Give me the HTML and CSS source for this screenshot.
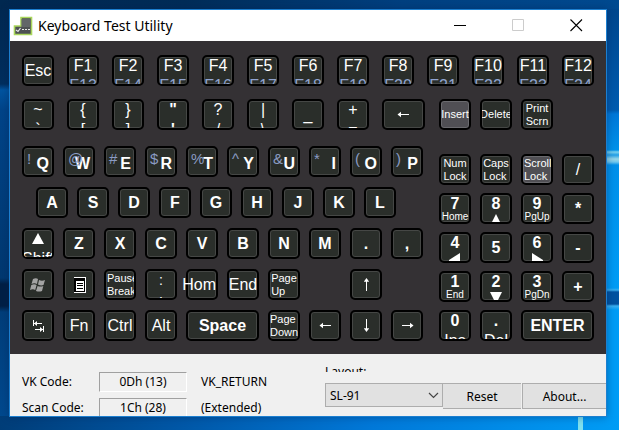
FILE: index.html
```html
<!DOCTYPE html>
<html lang="en">
<head>
<meta charset="utf-8">
<title>Keyboard Test Utility</title>
<link rel="stylesheet" href="styles.css">
</head>
<body>
<svg width="0" height="0" class="defs" aria-hidden="true">
  <defs>
    <symbol id="left" viewBox="0 0 13 13"><path d="M1 6.500h11" stroke="#fff"/><path d="M.5 6.500L4 3.800v5.400z" fill="#fff"/></symbol>
    <symbol id="up" viewBox="0 0 13 13"><path d="M6.500 1v12" stroke="#fff"/><path d="M6.500 0l2.700 3.700H3.800z" fill="#fff"/></symbol>
  </defs>
</svg>
<main class="window">
  <header class="titlebar">
    <svg class="app-icon" viewBox="0 0 20 20" aria-hidden="true">
      <path d="M8 1.500h10.500v17H1.500V10H8z" fill="#4d5153" stroke="#a9d65c" stroke-width="1.600"/>
      <path d="M8.500 3h9v8h-9z" fill="#626668"/>
      <path d="M3 14l2 1.500L7.500 12M9 13.500h2m1 0h2m1 0h2" fill="none" stroke="#e8e8e8" stroke-width="1.200"/>
    </svg>
    <h1>Keyboard Test Utility</h1>
    <button class="caption" aria-label="Minimize"><svg viewBox="0 0 13 13"><path d="M0 6.500h12" stroke="#000"/></svg></button>
    <button class="caption" aria-label="Maximize" disabled><svg viewBox="0 0 13 13"><path d="M.5.5h11v11H.5z" fill="none" stroke="#ccc"/></svg></button>
    <button class="caption" aria-label="Close"><svg viewBox="0 0 13 13"><path d="M.5.5l11.500 11.500M12 .5L.5 12" stroke="#000" stroke-width="1.100"/></svg></button>
  </header>

  <section class="keyboard">
    <div class="row spread">
      <button class="key">Esc</button>
      <button class="key dual fn">F1<span>F13</span></button>
      <button class="key dual fn">F2<span>F14</span></button>
      <button class="key dual fn">F3<span>F15</span></button>
      <button class="key dual fn">F4<span>F16</span></button>
      <button class="key dual fn">F5<span>F17</span></button>
      <button class="key dual fn">F6<span>F18</span></button>
      <button class="key dual fn">F7<span>F19</span></button>
      <button class="key dual fn">F8<span>F20</span></button>
      <button class="key dual fn">F9<span>F21</span></button>
      <button class="key dual fn">F10<span>F22</span></button>
      <button class="key dual fn">F11<span>F23</span></button>
      <button class="key dual fn">F12<span>F24</span></button>
    </div>
    <div class="row spread second">
      <div class="row symbols">
        <button class="key dual">~<span>`</span></button>
        <button class="key dual">{<span>[</span></button>
        <button class="key dual">}<span>]</span></button>
        <button class="key dual bold">"<span>'</span></button>
        <button class="key dual">?<span>/</span></button>
        <button class="key dual">|<span>\</span></button>
        <button class="key">_</button>
        <button class="key dual">+<span>=</span></button>
        <button class="key backspace" aria-label="Backspace"><svg class="arrow"><use href="#left"/></svg></button>
      </div>
      <div class="pad">
        <button class="key small pressed">Insert</button>
        <button class="key small">Delete</button>
        <button class="key small">Print<br>Scrn</button>
      </div>
    </div>
    <div class="row spread lower">
      <div class="letters">
        <div class="keys">
          <button class="key letter"><span>!</span>Q</button>
          <button class="key letter"><span>@</span>W</button>
          <button class="key letter"><span>#</span>E</button>
          <button class="key letter"><span>$</span>R</button>
          <button class="key letter"><span>%</span>T</button>
          <button class="key letter"><span>^</span>Y</button>
          <button class="key letter"><span>&amp;</span>U</button>
          <button class="key letter"><span>*</span>I</button>
          <button class="key letter"><span>(</span>O</button>
          <button class="key letter"><span>)</span>P</button>
        </div>
        <div class="keys home-row">
          <button class="key bold">A</button>
          <button class="key bold">S</button>
          <button class="key bold">D</button>
          <button class="key bold">F</button>
          <button class="key bold">G</button>
          <button class="key bold">H</button>
          <button class="key bold">J</button>
          <button class="key bold">K</button>
          <button class="key bold">L</button>
        </div>
        <div class="keys">
          <button class="key dual"><svg class="shift" viewBox="0 0 12 18" aria-hidden="true"><path d="M6 3l6 11H0z" fill="#fff"/></svg><span>Shift</span></button>
          <button class="key bold">Z</button>
          <button class="key bold">X</button>
          <button class="key bold">C</button>
          <button class="key bold">V</button>
          <button class="key bold">B</button>
          <button class="key bold">N</button>
          <button class="key bold">M</button>
          <button class="key bold">.</button>
          <button class="key bold">,</button>
        </div>
        <div class="keys">
          <button class="key" aria-label="Windows"><svg class="glyph" viewBox="0 0 17 16"><path d="M3 2q3-1.500 5 0L7 7Q4.500 5.500 1.500 7zM9 3q3 1.300 6 0l-1.500 5Q11 9 8 7.500zM1.300 8q3-1.500 5.300 0L5.200 13Q3 11.500 0 13zM7.600 9q3 1.200 5.700 0L12 14q-3 1.200-6 0z" fill="#a3a3a3"/></svg></button>
          <button class="key" aria-label="Menu"><svg class="glyph" viewBox="0 0 17 16"><path d="M3 0h12v16H3z" fill="#fff"/><path d="M3 1h11v14H3z" fill="#000"/><path d="M5 4h8v10H5z" fill="#fff"/><path d="M6 6.500h6M6 8.500h6M6 11.500h6" stroke="#000"/></svg></button>
          <button class="key small start">Pause<br>Break</button>
          <button class="key dual colon">:<span>;</span></button>
          <button class="key spill">Hom</button>
          <button class="key">End</button>
          <button class="key small">Page<br>Up</button>
          <button class="key up-key" aria-label="Up"><svg class="arrow"><use href="#up"/></svg></button>
        </div>
        <div class="keys">
          <button class="key" aria-label="Tab"><svg class="glyph" viewBox="0 0 17 16"><path d="M3.500 2v6M4 5.500h8M13.500 8v6M5 11.500h8" stroke="#fff"/><path d="M4 5.500L7 3v5zM13 11.500L10 9v5z" fill="#fff"/></svg></button>
          <button class="key">Fn</button>
          <button class="key">Ctrl</button>
          <button class="key">Alt</button>
          <button class="key bold wide">Space</button>
          <button class="key small">Page<br>Down</button>
          <button class="key" aria-label="Left"><svg class="arrow"><use href="#left"/></svg></button>
          <button class="key" aria-label="Down"><svg class="arrow half-turn"><use href="#up"/></svg></button>
          <button class="key" aria-label="Right"><svg class="arrow half-turn"><use href="#left"/></svg></button>
        </div>
      </div>
      <div class="pad">
        <button class="key small">Num<br>Lock</button>
        <button class="key small">Caps<br>Lock</button>
        <button class="key small pressed start">Scroll<br>Lock</button>
        <button class="key">/</button>
        <button class="key num">7<span>Home</span></button>
        <button class="key num">8<svg viewBox="0 0 12 9" aria-hidden="true"><path d="M6 1l4 8H2z" fill="#fff"/></svg></button>
        <button class="key num">9<span>PgUp</span></button>
        <button class="key bold">*</button>
        <button class="key num">4<svg viewBox="0 0 12 9" aria-hidden="true"><path d="M0 8l11-7v8H0z" fill="#fff"/></svg></button>
        <button class="key bold">5</button>
        <button class="key num">6<svg viewBox="0 0 12 9" aria-hidden="true"><path d="M1 1l11 7v1H1z" fill="#fff"/></svg></button>
        <button class="key bold">-</button>
        <button class="key num">1<span>End</span></button>
        <button class="key num">2<svg viewBox="0 0 12 9" aria-hidden="true"><path d="M0 1h12L8 9H4z" fill="#fff"/></svg></button>
        <button class="key num">3<span>PgDn</span></button>
        <button class="key bold">+</button>
        <button class="key dual"><b>0</b><span>Ins</span></button>
        <button class="key dual"><b>.</b><span>Del</span></button>
        <button class="key bold wide">ENTER</button>
      </div>
    </div>
  </section>

  <section class="status">
    <div class="codes">
      <span>VK Code:</span><output class="box">0Dh (13)</output><span>VK_RETURN</span>
      <span>Scan Code:</span><output class="box">1Ch (28)</output><span>(Extended)</span>
    </div>
    <div class="controls">
      <label for="layout">Layout:</label>
      <div class="actions">
        <div class="picker">
          <select id="layout"><option>SL-91</option></select>
          <svg viewBox="0 0 11 7" aria-hidden="true"><path d="M1 1l4.500 4.500L10 1" fill="none" stroke="#444" stroke-width="1.200"/></svg>
        </div>
        <button class="action">Reset</button>
        <button class="action about">About...</button>
      </div>
    </div>
  </section>
</main>
</body>
</html>
```
FILE: styles.css
```css
* { box-sizing: border-box; }

body {
  margin: 0;
  padding: 9px 12px 13px 9px;
  min-height: 100vh;
  background:
    linear-gradient(#7fe0ee, #7fe0ee) right 36px bottom 0 / 5px 14px no-repeat,
    linear-gradient(90deg, #003d78, #0058a8 30%, #0078d8 60%, #009cf5) left bottom / 100% 14px no-repeat,
    linear-gradient(90deg, #002850, #002c58 30%, #004080 65%, #004a90) left top / 100% 9px no-repeat,
    linear-gradient(#00458a, #005cb0 110px, #0078d8 114px, #0092ea 150px, #7ad2ee 152px, #22a0e8 155px, #9ad8e8 159px, #70c8ee 162px, #0090ea 165px, #009cf5 288px, #3cb0f0 290px, #0052a0 292px, #0052a0 304px, #3cb0f0 306px, #009cf5 310px) right top / 14px 100% no-repeat,
    linear-gradient(#002850, #002e5e 84px, #0054a0 90px, #004488 110px, #003870 278px, #001f45 284px, #001f45 306px, #003e7a 312px, #004a90);
  font-family: "Noto Sans", "Open Sans", sans-serif;
}

.defs { position: absolute; }

button { font-family: inherit; padding: 0; }

.window {
  border: 1px solid #1c7fd0;
  background: #f0f0f0;
  box-shadow: 0 0 8px rgba(0, 30, 80, .4);
}

.titlebar {
  display: flex;
  align-items: center;
  height: 31px;
  padding: 0 1px 0 3px;
  background: #fff;
}

.app-icon { width: 20px; height: 20px; }

h1 {
  flex: 1;
  margin: 0 0 0 5px;
  font-size: 14px;
  font-weight: 400;
  line-height: 30px;
}

.caption {
  display: grid;
  place-items: center;
  width: 58px;
  height: 30px;
  border: 0;
  background: none;
}

.caption svg { width: 13px; height: 13px; }

.keyboard {
  padding: 14px 12px 13px;
  background: #343134;
  font-family: "Liberation Sans", Arial, sans-serif;
}

.row { display: flex; }
.spread { justify-content: space-between; }
.second { margin: 13px 0 16px; padding-right: 41px; }
.symbols { gap: 13px; }
.lower { align-items: flex-end; }

.letters { display: grid; gap: 10px; }

.keys {
  display: grid;
  grid-template-columns: repeat(10, 32px);
  column-gap: 9px;
}

.home-row { grid-template-columns: repeat(9, 32px); padding-left: 14px; }

.pad {
  display: grid;
  grid-template-columns: repeat(4, 32px);
  gap: 8px 9px;
}

.second .pad { grid-template-columns: repeat(3, 32px); }

.key {
  position: relative;
  display: flex;
  align-items: center;
  justify-content: center;
  width: 32px;
  height: 31px;
  border: 2px solid #000;
  border-radius: 5px;
  background: #2a2e2a;
  box-shadow: inset 0 0 0 1px #454745;
  color: #fff;
  font-size: 16px;
  line-height: 18px;
  white-space: nowrap;
  overflow: hidden;
}

.backspace { width: 43px; }
.wide { grid-column: span 2; width: 100%; }
.up-key { grid-column: 9; }
.bold, .letter, .num { font-weight: 700; }
.pressed { background: #504f54; box-shadow: inset 0 0 0 1px #6a6a6e; }
.spill { justify-content: flex-end; overflow: visible; }

.dual, .num { flex-direction: column; justify-content: flex-start; }
.dual span { margin-top: 2px; }
.fn span { color: #8fa3cf; }
.colon { font-size: 14px; }

.small { font-size: 11px; line-height: 13px; text-align: left; }
.start { justify-content: flex-start; padding-left: 1px; }

.letter { justify-content: flex-end; padding: 4px 3px 0 0; }
.letter span {
  position: absolute;
  top: 2px;
  left: 3px;
  color: #8b9cc4;
  font-size: 15px;
  font-weight: 400;
}

.num span { font-size: 10px; font-weight: 400; line-height: 8px; }
.num svg { width: 12px; height: 9px; }

.shift { width: 12px; height: 18px; flex: none; }
.arrow { width: 13px; height: 13px; }
.half-turn { transform: rotate(180deg); }
.glyph { width: 17px; height: 16px; }

.status {
  display: flex;
  justify-content: space-between;
  height: 62px;
  padding-left: 12px;
  overflow: hidden;
  font-size: 12px;
}

.codes {
  display: grid;
  grid-template-columns: 77px 88px auto;
  grid-auto-rows: 20px;
  row-gap: 6px;
  padding-top: 18px;
  line-height: 20px;
}

.codes span:nth-child(3n) { padding-left: 14px; }

.box {
  border: 1px solid;
  border-color: #a0a0a0 #fff #fff #a0a0a0;
  line-height: 18px;
  text-align: center;
}

.controls { padding-top: 10px; }

.controls label {
  display: block;
  height: 8px;
  margin-bottom: 11px;
  line-height: 16px;
  overflow: hidden;
}

.actions { display: flex; align-items: flex-start; }

.picker { position: relative; }

select {
  appearance: none;
  display: block;
  width: 118px;
  height: 24px;
  padding: 0 4px;
  border: 1px solid #adadad;
  border-radius: 0;
  background: #e1e1e1;
  color: #000;
  font: inherit;
}

.picker svg {
  position: absolute;
  top: 9px;
  right: 4px;
  width: 11px;
  height: 7px;
  pointer-events: none;
}

.action {
  width: 78px;
  height: 26px;
  border: 1px solid #adadad;
  border-width: 1px 0;
  background: #e1e1e1;
  color: #000;
  font-size: 12px;
}

.about { width: 84px; margin-left: 1px; border-left-width: 1px; }
```
